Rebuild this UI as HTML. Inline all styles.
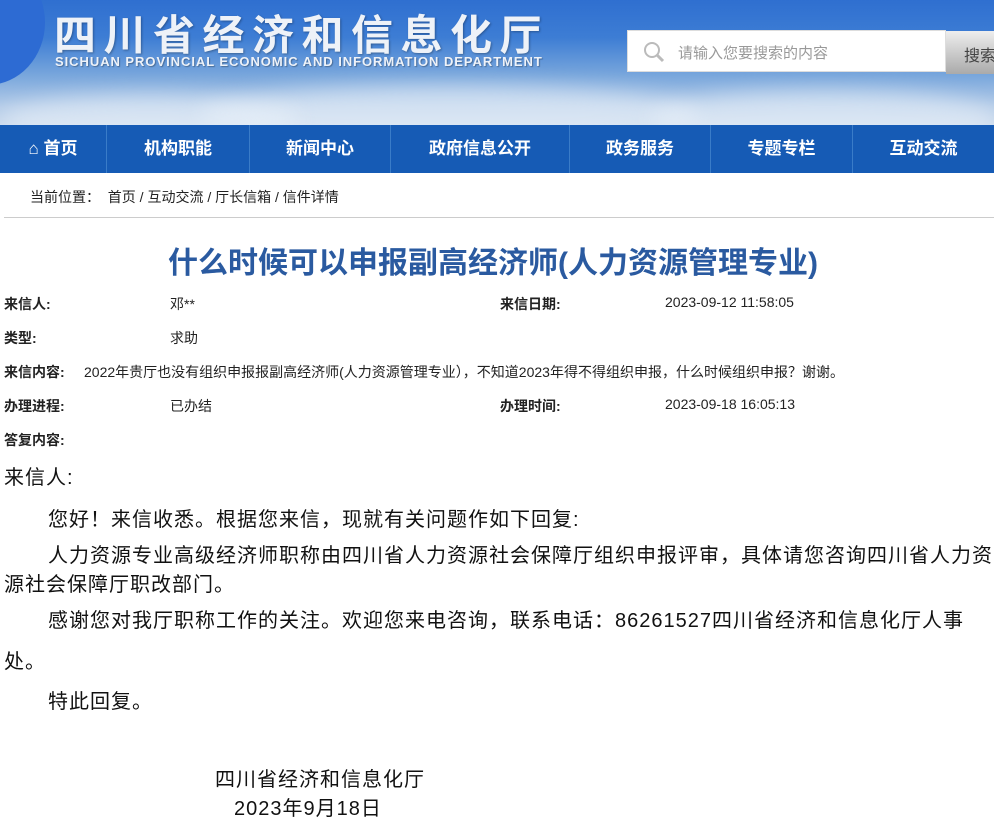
<!DOCTYPE html>
<html><head><meta charset="utf-8">
<style>
*{margin:0;padding:0;box-sizing:border-box}
body{width:994px;height:820px;overflow:hidden;background:#fff;font-family:"Liberation Sans","Noto Sans CJK SC",sans-serif;color:#222;position:relative}
.hd{position:absolute;left:0;top:0;width:994px;height:125px;background:linear-gradient(180deg,#2f6fd0 0%,#3d7dd4 30%,#78a6dc 60%,#b3cbe8 85%,#c8d8ec 100%);overflow:hidden}
.hd .blob{position:absolute;left:-70px;top:-40px;width:115px;height:125px;border-radius:50%;background:#2d6bd3}
.hd .cloud{position:absolute;border-radius:50%;background:rgba(235,242,250,.55);filter:blur(10px)}
.t1{position:absolute;left:54px;top:6px;font-size:42px;font-weight:bold;color:#eef2f8;letter-spacing:7.5px;font-family:"Noto Sans CJK SC",sans-serif;text-shadow:1px 1px 2px rgba(0,0,0,.3);line-height:54px}
.t2{position:absolute;left:55px;top:54px;font-size:13px;font-weight:bold;color:#eef2f8;letter-spacing:.95px;text-shadow:1px 1px 1px rgba(0,0,0,.3)}
.sb{position:absolute;left:627px;top:30px;width:319px;height:42px;background:#fff;border:1px solid #ddd}
.sb span{position:absolute;left:50px;top:11px;font-size:15px;color:#999}
.btn{position:absolute;left:946px;top:31px;width:60px;height:43px;background:linear-gradient(#eee,#aaa);font-size:16px;color:#444;padding:11px 0 0 18px}
.nav{position:absolute;left:0;top:125px;width:994px;height:48px;background:#165bb5}
.nav div{position:absolute;top:0;height:48px;line-height:48px;color:#fff;font-weight:bold;font-size:17px;text-align:center;border-left:1px solid #3a7cc8}
.bc{position:absolute;left:30px;top:187px;font-size:14px;color:#222}
.line{position:absolute;left:4px;top:217px;width:990px;height:1px;background:#ccc}
.title{position:absolute;left:0;width:986px;top:238px;text-align:center;font-size:30px;font-weight:bold;color:#2a5aa0}
.r{position:absolute;font-size:14px;white-space:nowrap}
.b{font-weight:bold}
.p{position:absolute;font-size:20px;letter-spacing:1px;white-space:nowrap;color:#111}
</style></head><body>
<div class="hd">
<div class="cloud" style="left:200px;top:85px;width:500px;height:60px"></div>
<div class="cloud" style="left:0;top:95px;width:300px;height:50px"></div>
<div class="cloud" style="left:650px;top:90px;width:350px;height:60px"></div>
<div class="blob"></div>
<div class="t1">四川省经济和信息化厅</div>
<div class="t2">SICHUAN PROVINCIAL ECONOMIC AND INFORMATION DEPARTMENT</div>
<div class="sb"><svg style="position:absolute;left:14px;top:9px" width="24" height="24" viewBox="0 0 24 24"><circle cx="10" cy="10" r="7" fill="none" stroke="#bbb" stroke-width="2"/><path d="M15 15l6 6" stroke="#bbb" stroke-width="3"/></svg><span>请输入您要搜索的内容</span></div>
<div class="btn">搜索</div>
</div>
<div class="nav">
<div style="left:0;width:106px;border:none">⌂ 首页</div>
<div style="left:106px;width:143px">机构职能</div>
<div style="left:249px;width:141px">新闻中心</div>
<div style="left:390px;width:179px">政府信息公开</div>
<div style="left:569px;width:141px">政务服务</div>
<div style="left:710px;width:142px">专题专栏</div>
<div style="left:852px;width:142px">互动交流</div>
</div>
<div class="bc">当前位置：&nbsp; 首页 / 互动交流 / 厅长信箱 / 信件详情</div>
<div class="line"></div>
<div class="title">什么时候可以申报副高经济师(人力资源管理专业)</div>
<div class="r b" style="left:4px;top:294px">来信人:</div><div class="r" style="left:170px;top:294px">邓**</div>
<div class="r b" style="left:500px;top:294px">来信日期:</div><div class="r" style="left:665px;top:294px">2023-09-12 11:58:05</div>
<div class="r b" style="left:4px;top:328px">类型:</div><div class="r" style="left:170px;top:328px">求助</div>
<div class="r b" style="left:4px;top:362px">来信内容:</div><div class="r" style="left:84px;top:362px">2022年贵厅也没有组织申报报副高经济师(人力资源管理专业），不知道2023年得不得组织申报，什么时候组织申报？谢谢。</div>
<div class="r b" style="left:4px;top:396px">办理进程:</div><div class="r" style="left:170px;top:396px">已办结</div>
<div class="r b" style="left:500px;top:396px">办理时间:</div><div class="r" style="left:665px;top:396px">2023-09-18 16:05:13</div>
<div class="r b" style="left:4px;top:430px">答复内容:</div>
<div class="p" style="left:4px;top:461px">来信人:</div>
<div class="p" style="left:48px;top:503px">您好！来信收悉。根据您来信，现就有关问题作如下回复:</div>
<div class="p" style="left:48px;top:539px">人力资源专业高级经济师职称由四川省人力资源社会保障厅组织申报评审，具体请您咨询四川省人力资</div>
<div class="p" style="left:4px;top:568px">源社会保障厅职改部门。</div>
<div class="p" style="left:48px;top:604px">感谢您对我厅职称工作的关注。欢迎您来电咨询，联系电话：86261527四川省经济和信息化厅人事</div>
<div class="p" style="left:4px;top:645px">处。</div>
<div class="p" style="left:48px;top:685px">特此回复。</div>
<div class="p" style="left:215px;top:763px">四川省经济和信息化厅</div>
<div class="p" style="left:234px;top:792px">2023年9月18日</div>
</body></html>
